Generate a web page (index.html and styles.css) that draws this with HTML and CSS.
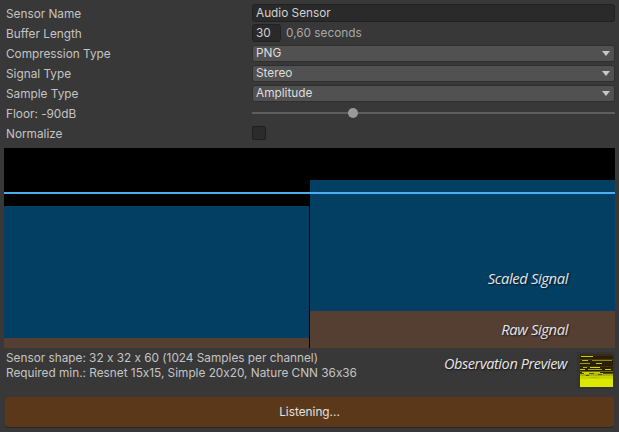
FILE: index.html
```html
<!DOCTYPE html>
<html>
<head>
<meta charset="utf-8">
<link rel="stylesheet" href="styles.css">
</head>
<body>
<div class="inspector">
  <div class="row"><span class="label">Sensor Name</span><div class="text-field">Audio Sensor</div></div>
  <div class="row"><span class="label">Buffer Length</span><div class="buffer"><div class="num-field">30</div><span class="hint">0,60 seconds</span></div></div>
  <div class="row"><span class="label">Compression Type</span><div class="dropdown">PNG<span class="caret"></span></div></div>
  <div class="row"><span class="label">Signal Type</span><div class="dropdown">Stereo<span class="caret"></span></div></div>
  <div class="row"><span class="label">Sample Type</span><div class="dropdown">Amplitude<span class="caret"></span></div></div>
  <div class="row"><span class="label">Floor: -90dB</span><div class="slider"><div class="track"></div><div class="thumb"></div></div></div>
  <div class="row"><span class="label">Normalize</span><div class="checkbox"></div></div>
</div>

<div class="graph">
  <div class="panel">
    <div class="bar-blue left-blue"></div>
    <div class="bar-brown left-brown"></div>
  </div>
  <div class="sep"></div>
  <div class="panel">
    <div class="bar-blue right-blue"><span class="caption">Scaled Signal</span></div>
    <div class="bar-brown right-brown"><span class="caption">Raw Signal</span></div>
  </div>
  <div class="level-line"></div>
</div>

<div class="info">
  <div class="info-text">
    <div>Sensor shape: 32 x 32 x 60 (1024 Samples per channel)</div>
    <div>Required min.: Resnet 15x15, Simple 20x20, Nature CNN 36x36</div>
  </div>
  <span class="caption preview-caption">Observation Preview</span>
  <div class="thumb-box">
    <svg class="thumb-img" width="33" height="33" viewBox="0 0 33 33" shape-rendering="crispEdges">
      <rect x="0" y="0" width="33" height="33" fill="#2b1f0a"/>
      <rect x="0" y="0" width="33" height="2" fill="#3a2c10"/>
      <rect x="1" y="2" width="12" height="1" fill="#c9d200"/>
      <rect x="0" y="5" width="33" height="1" fill="#4a3a12"/>
      <rect x="2" y="6" width="6" height="1" fill="#b9c400"/>
      <rect x="12" y="6" width="20" height="1" fill="#8d8e06"/>
      <rect x="0" y="9" width="10" height="1" fill="#9ea602"/>
      <rect x="16" y="9" width="6" height="1" fill="#c4cf00"/>
      <rect x="0" y="12" width="33" height="1" fill="#3d300c"/>
      <rect x="3" y="13" width="4" height="1" fill="#b0bb00"/>
      <rect x="10" y="13" width="10" height="1" fill="#d2dc00"/>
      <rect x="0" y="15" width="5" height="1" fill="#c4ce00"/>
      <rect x="8" y="15" width="14" height="1" fill="#a3aa02"/>
      <rect x="25" y="15" width="6" height="1" fill="#c8d300"/>
      <rect x="0" y="17" width="33" height="1" fill="#6b6a06"/>
      <rect x="2" y="18" width="18" height="1" fill="#c4cf00"/>
      <rect x="0" y="19" width="33" height="1" fill="#545008"/>
      <rect x="4" y="19" width="5" height="1" fill="#d0da00"/>
      <rect x="14" y="19" width="9" height="1" fill="#b8c200"/>
      <rect x="0" y="20" width="33" height="2" fill="#a8b200"/>
      <rect x="6" y="21" width="3" height="1" fill="#5a560a"/>
      <rect x="18" y="20" width="4" height="1" fill="#5e5a08"/>
      <rect x="0" y="22" width="33" height="3" fill="#c9d400"/>
      <rect x="0" y="25" width="33" height="8" fill="#dce800"/>
      <rect x="10" y="23" width="8" height="1" fill="#b2bd00"/>
    </svg>
  </div>
</div>

<div class="button">Listening...</div>
</body>
</html>
```

FILE: styles.css
```css
html, body {
  margin: 0;
  padding: 0;
}
body {
  background: #383838;
  width: 619px;
  height: 432px;
  overflow: hidden;
  font-family: Inter, "Noto Sans", sans-serif;
  font-size: 11.8px;
  font-feature-settings: "calt" 0;
  color: #c4c4c4;
}
.inspector {
  padding-top: 4px;
  display: flex;
  flex-direction: column;
}
.row {
  height: 20px;
  display: grid;
  grid-template-columns: 246px 363px;
  padding-left: 6px;
  align-items: start;
}
.label {
  line-height: 20px;
  white-space: nowrap;
}
.text-field {
  height: 16px;
  line-height: 16px;
  background: #2a2a2a;
  border: 1px solid #212121;
  border-radius: 3px;
  padding-left: 3px;
  color: #d2d2d2;
}
.buffer {
  display: flex;
  align-items: center;
  gap: 5px;
  height: 18px;
}
.num-field {
  width: 24px;
  height: 16px;
  line-height: 16px;
  background: #2a2a2a;
  border: 1px solid #212121;
  border-radius: 3px;
  padding-left: 3px;
  color: #d2d2d2;
}
.hint {
  color: #a8a8a8;
}
.dropdown {
  margin-top: 1px;
  height: 15px;
  line-height: 15px;
  background: #515151;
  border: 1px solid #2f2f2f;
  border-radius: 3px;
  padding-left: 3px;
  color: #dedede;
  display: flex;
  justify-content: space-between;
  align-items: center;
}
.caret {
  width: 0;
  height: 0;
  border-left: 4.5px solid transparent;
  border-right: 4.5px solid transparent;
  border-top: 5px solid #c8c8c8;
  margin-right: 4px;
}
.slider {
  position: relative;
  height: 20px;
}
.track {
  position: absolute;
  left: 0;
  right: 0;
  top: 8px;
  height: 2px;
  background: #5e5e5e;
}
.thumb {
  position: absolute;
  left: 96px;
  top: 4px;
  width: 10px;
  height: 10px;
  border-radius: 50%;
  background: #999999;
}
.checkbox {
  margin-top: 2px;
  width: 12px;
  height: 12px;
  background: #2b2b2b;
  border: 1px solid #1f1f1f;
  border-radius: 2px;
}
.graph {
  position: relative;
  margin: 4px 0 0 4px;
  width: 611px;
  height: 200px;
  background: #000;
  display: flex;
}
.panel {
  width: 305px;
  display: flex;
  flex-direction: column;
  justify-content: flex-end;
}
.sep {
  width: 1px;
  background: #000;
}
.bar-blue {
  background: #033f63;
  position: relative;
}
.bar-brown {
  background: #553f33;
  position: relative;
}
.left-blue { height: 132px; }
.left-brown { height: 10px; }
.right-blue {
  height: 131px;
  display: flex;
  justify-content: flex-end;
  align-items: flex-end;
  padding-right: 47px;
  padding-bottom: 23px;
  box-sizing: border-box;
}
.right-brown {
  height: 37px;
  display: flex;
  justify-content: flex-end;
  align-items: center;
  padding-right: 47px;
  padding-bottom: 2px;
  box-sizing: border-box;
}
.caption {
  font-family: "Open Sans", "Noto Sans", sans-serif;
  font-style: italic;
  font-size: 14.8px;
  letter-spacing: -0.4px;
  color: #e6e6e6;
  text-shadow: 1px 1px 2px rgba(0, 0, 0, 0.7);
  white-space: nowrap;
}
.level-line {
  position: absolute;
  left: 0;
  right: 0;
  top: 44px;
  height: 2px;
  background: #4aaef0;
}
.info {
  height: 48px;
  display: flex;
  align-items: flex-start;
  padding-left: 6px;
}
.info-text {
  flex: 1;
  padding-top: 3px;
  line-height: 15px;
  color: #c4c4c4;
  white-space: nowrap;
}
.preview-caption {
  margin-top: 6px;
  margin-right: 10px;
  font-size: 14.5px;
}
.thumb-box {
  margin-top: 4px;
  margin-right: 4px;
  width: 38px;
  height: 37px;
  background: #333333;
  display: flex;
  align-items: center;
  justify-content: center;
}
.thumb-img {
  display: block;
}
.button {
  margin: 1px 5px 0 5px;
  height: 30px;
  line-height: 30px;
  background: #5a3819;
  border-radius: 3px;
  text-align: center;
  color: #e2e2e2;
  box-shadow: 0 1px 0 #262626;
}
```
